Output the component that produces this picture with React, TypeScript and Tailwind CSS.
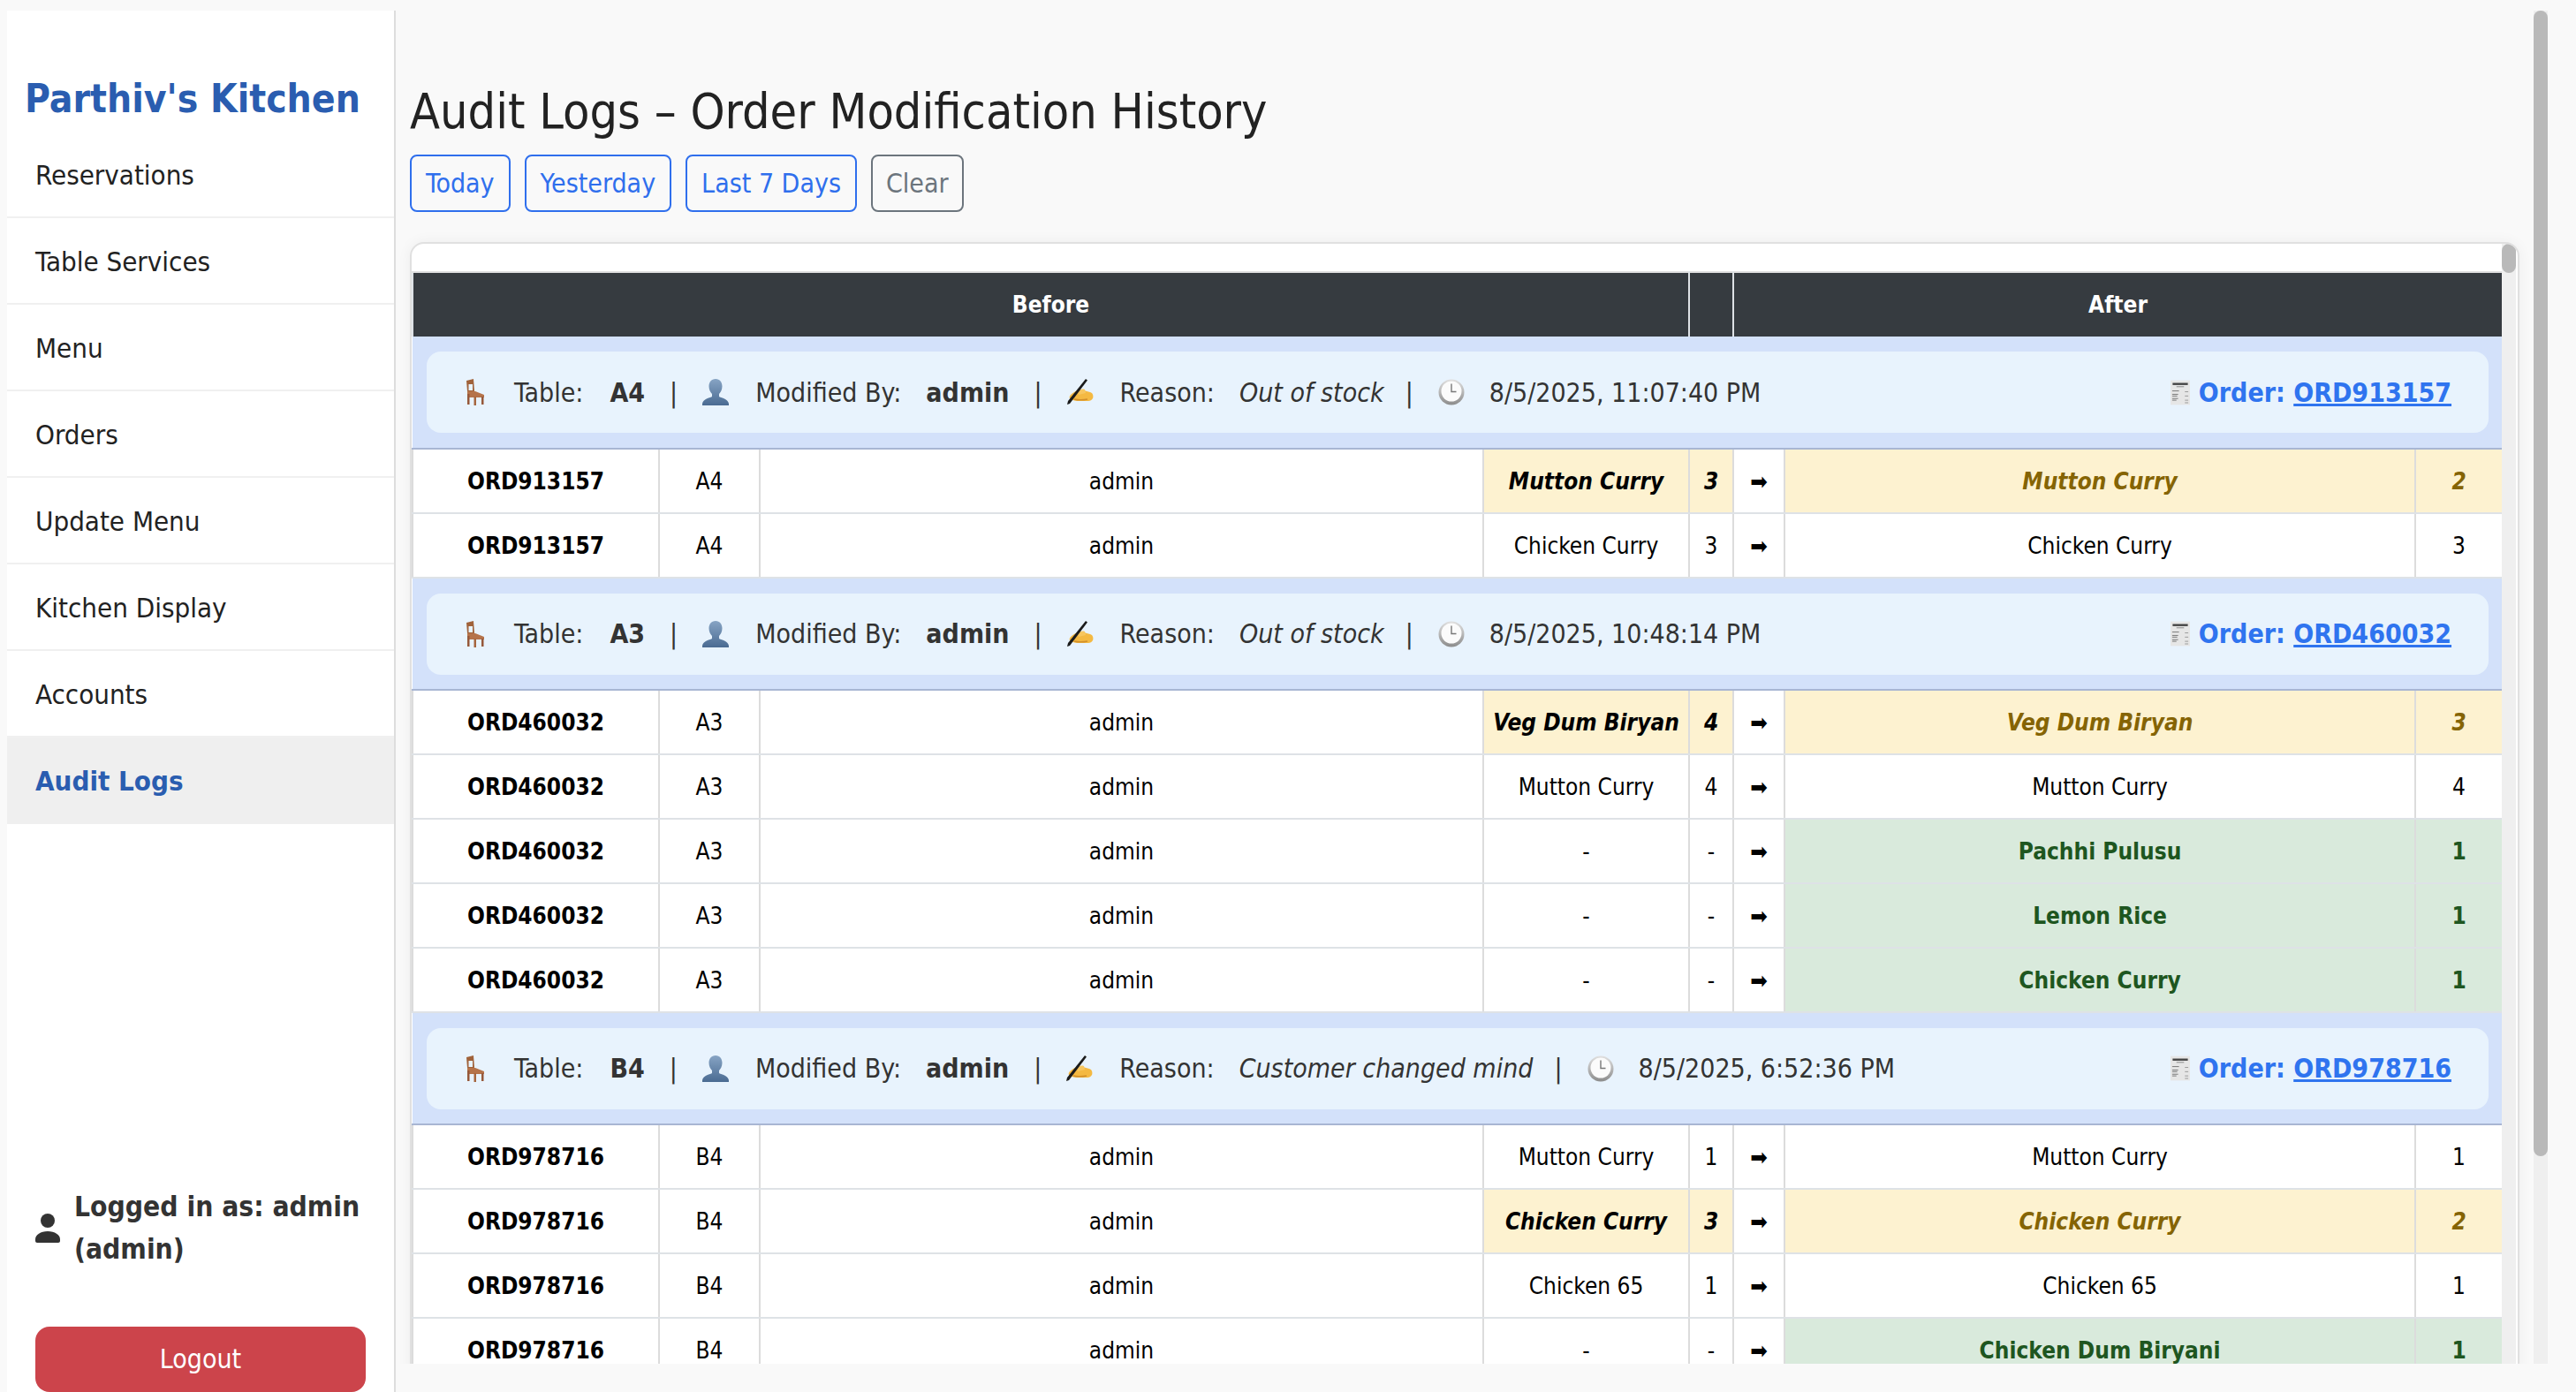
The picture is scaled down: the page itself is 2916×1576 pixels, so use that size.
import React from "react";

type RowKind = "plain" | "changed" | "added";

interface LogRow {
  item: string;
  qty: string;
  afterItem: string;
  afterQty: string;
  kind: RowKind;
}

interface LogGroup {
  table: string;
  reason: string;
  time: string;
  order: string;
  rows: LogRow[];
}

const navItems = ["Reservations", "Table Services", "Menu", "Orders", "Update Menu", "Kitchen Display", "Accounts"];

const groups: LogGroup[] = [
  {
    table: "A4",
    reason: "Out of stock",
    time: "8/5/2025, 11:07:40 PM",
    order: "ORD913157",
    rows: [
      { item: "Mutton Curry", qty: "3", afterItem: "Mutton Curry", afterQty: "2", kind: "changed" },
      { item: "Chicken Curry", qty: "3", afterItem: "Chicken Curry", afterQty: "3", kind: "plain" },
    ],
  },
  {
    table: "A3",
    reason: "Out of stock",
    time: "8/5/2025, 10:48:14 PM",
    order: "ORD460032",
    rows: [
      { item: "Veg Dum Biryan", qty: "4", afterItem: "Veg Dum Biryan", afterQty: "3", kind: "changed" },
      { item: "Mutton Curry", qty: "4", afterItem: "Mutton Curry", afterQty: "4", kind: "plain" },
      { item: "-", qty: "-", afterItem: "Pachhi Pulusu", afterQty: "1", kind: "added" },
      { item: "-", qty: "-", afterItem: "Lemon Rice", afterQty: "1", kind: "added" },
      { item: "-", qty: "-", afterItem: "Chicken Curry", afterQty: "1", kind: "added" },
    ],
  },
  {
    table: "B4",
    reason: "Customer changed mind",
    time: "8/5/2025, 6:52:36 PM",
    order: "ORD978716",
    rows: [
      { item: "Mutton Curry", qty: "1", afterItem: "Mutton Curry", afterQty: "1", kind: "plain" },
      { item: "Chicken Curry", qty: "3", afterItem: "Chicken Curry", afterQty: "2", kind: "changed" },
      { item: "Chicken 65", qty: "1", afterItem: "Chicken 65", afterQty: "1", kind: "plain" },
      { item: "-", qty: "-", afterItem: "Chicken Dum Biryani", afterQty: "1", kind: "added" },
    ],
  },
];

const ChairIcon = () => (
  <svg width="22" height="30" viewBox="0 0 22 30" className="mr-[5px] shrink-0">
    <path d="M1 2l8-2 1 14H2z" fill="#a0623a" />
    <rect x="3.500" y="6" width="4.500" height="7" fill="#e8f3fd" />
    <path d="M2 14h9l10 4v3H2z" fill="#b5734a" />
    <rect x="2" y="17" width="2.500" height="12" fill="#96583a" />
    <rect x="9.500" y="20" width="2.500" height="10" fill="#a5663f" />
    <rect x="18" y="20" width="2.500" height="9" fill="#96583a" />
  </svg>
);

const BustIcon = () => (
  <svg width="30" height="30" viewBox="0 0 30 30" className="mr-[2px] shrink-0">
    <defs>
      <linearGradient id="bust" x1="0" y1="0" x2="0" y2="1">
        <stop offset="0" stopColor="#87a4c4" />
        <stop offset="1" stopColor="#4a6b92" />
      </linearGradient>
    </defs>
    <path
      d="M15 0c5 0 7.500 4 7.500 8.500 0 4-2 7-3.500 8.500v3c1.500 1.500 10 2 11 8v2H0v-2c1-6 9.500-6.500 11-8v-3C9.500 15.500 7.500 12.500 7.500 8.500 7.500 4 10 0 15 0z"
      fill="url(#bust)"
    />
  </svg>
);

const HandIcon = () => (
  <svg width="30" height="30" viewBox="0 0 30 30" className="mr-[2px] shrink-0">
    <path d="M4 18c3-3 7-5 11-6l11 3c3 1 4 4 3 7-1 2-3 3-5 3H12c-3 0-7-1-9-3-1-1 0-3 1-4z" fill="#f4b942" />
    <path d="M8 23c4 1 10 1 15 0" stroke="#d18f2a" strokeWidth="1.500" fill="none" />
    <path d="M12 14c2-2 5-3 8-2l1 4-8 2z" fill="#f7c65f" />
    <path d="M21 0l2 1.500L3 28 0 29l1-4z" fill="#1b1b1b" />
  </svg>
);

const ClockIcon = () => (
  <svg width="30" height="30" viewBox="0 0 30 30" className="shrink-0">
    <defs>
      <linearGradient id="clockRim" x1="0" y1="0" x2="0" y2="1">
        <stop offset="0" stopColor="#e0e0e0" />
        <stop offset="1" stopColor="#8c8c8c" />
      </linearGradient>
    </defs>
    <circle cx="15" cy="15" r="14.500" fill="url(#clockRim)" />
    <circle cx="15" cy="14" r="11.500" fill="#fbfbfb" />
    <path d="M15 5.500V14.500h5.500" stroke="#777777" strokeWidth="1.400" fill="none" />
  </svg>
);

const ReceiptIcon = () => (
  <svg width="22" height="29" viewBox="0 0 23 29" className="shrink-0">
    <rect width="23" height="29" fill="#e6e6e6" />
    <rect x="2.500" y="3" width="18" height="2.500" fill="#444444" />
    <rect x="7" y="7" width="9" height="1" fill="#888888" />
    <rect x="2" y="12" width="8" height="1" fill="#777777" />
    <rect x="17" y="13" width="4" height="1" fill="#999999" />
    <rect x="2" y="16" width="7" height="1" fill="#777777" />
    <rect x="2" y="18" width="6" height="1" fill="#777777" />
    <rect x="17" y="18" width="4" height="1" fill="#999999" />
    <rect x="2" y="21" width="7" height="1" fill="#777777" />
    <rect x="2" y="23" width="5" height="1" fill="#777777" />
    <rect x="17" y="23" width="4" height="1" fill="#999999" />
    <rect x="17" y="26" width="4" height="1" fill="#999999" />
  </svg>
);

const UserIcon = () => (
  <svg width="28" height="33" viewBox="0 0 28 33" className="shrink-0">
    <circle cx="14" cy="8" r="8" fill="#333333" />
    <path d="M0 31v-2c0-5 6-9 14-9s14 4 14 9v2c0 1-1 2-2 2H2c-1 0-2-1-2-2z" fill="#333333" />
  </svg>
);

const cellBorder = "border-x-2 border-b-2 border-x-[#dcdcdc] border-b-[#dee2e6] pt-[2px]";

const Row: React.FC<{ row: LogRow; order: string; table: string }> = ({ row, order, table }) => {
  const changed = row.kind === "changed";
  const added = row.kind === "added";
  const afterClass = changed
    ? "bg-[#fdf2d0] text-[#856404] font-bold italic"
    : added
      ? "bg-[#d9eadc] text-[#1e5620] font-bold"
      : "bg-white text-black";
  const beforeClass = changed ? "bg-[#fdf2d0] font-bold italic" : "bg-white";

  return (
    <tr className="h-[73px] text-center text-[26px] text-black">
      <td className={`${cellBorder} bg-white font-bold`}>{order}</td>
      <td className={`${cellBorder} bg-white`}>{table}</td>
      <td className={`${cellBorder} bg-white`}>admin</td>
      <td className={`${cellBorder} ${beforeClass} whitespace-nowrap`}>{row.item}</td>
      <td className={`${cellBorder} ${beforeClass}`}>{row.qty}</td>
      <td className={`${cellBorder} bg-white`}>➡</td>
      <td className={`${cellBorder} ${afterClass}`}>{row.afterItem}</td>
      <td className={`${cellBorder} ${afterClass}`}>{row.afterQty}</td>
    </tr>
  );
};

const GroupHeader: React.FC<{ group: LogGroup }> = ({ group }) => (
  <tr>
    <td colSpan={8} className="h-[127px] border-b-2 border-b-[#a8b6d3] bg-[#d3e1fa] px-4">
      <div className="flex h-[92px] items-center justify-between rounded-2xl bg-[#e8f3fd] pl-[44px] pr-[42px] text-[30px] text-[#333333]">
        <div className="flex items-center gap-[28px] whitespace-nowrap">
          <ChairIcon />
          <span className="flex gap-[30px]">
            <span>Table:</span>
            <b>{group.table}</b>
          </span>
          <span>|</span>
          <BustIcon />
          <span className="flex gap-[28px]">
            <span>Modified By:</span>
            <b>admin</b>
          </span>
          <span>|</span>
          <HandIcon />
          <span className="flex gap-[28px]">
            <span>Reason:</span>
            <i>{group.reason}</i>
          </span>
          <span className="-ml-[4px]">|</span>
          <ClockIcon />
          <span>{group.time}</span>
        </div>
        <div className="flex items-center gap-[10px] whitespace-nowrap font-bold text-[#2f74ef]">
          <ReceiptIcon />
          <span>
            Order: <a className="underline">{group.order}</a>
          </span>
        </div>
      </div>
    </td>
  </tr>
);

export default function App() {
  return (
    <div className="flex h-[1576px] w-[2916px] overflow-hidden bg-[#f9f9f9] font-['DejaVu_Sans_Condensed','DejaVu_Sans',sans-serif] font-stretch-condensed">
      <aside className="ml-2 mt-3 flex h-[1564px] w-[440px] shrink-0 flex-col border-r-2 border-r-[#dddddd] bg-white">
        <h1 className="mt-[68px] pl-[20px] text-[44px] font-bold leading-[63px] text-[#2a5db0] whitespace-nowrap">Parthiv's Kitchen</h1>
        <nav className="mt-[6px] flex flex-col">
          {navItems.map((name) => (
            <a key={name} className="flex h-[98px] items-center border-b-2 border-b-[#f0f0f0] pl-8 pt-[2px] text-[31px] text-[#222222]">
              {name}
            </a>
          ))}
          <a className="flex h-[98px] items-center bg-[#efefef] pl-8 text-[31px] font-bold text-[#2a5db0]">Audit Logs</a>
        </nav>
        <div className="mt-auto flex items-center gap-4 pl-8 text-[31.500px] font-bold leading-[48px] text-[#333333]">
          <UserIcon />
          <div>
            Logged in as: admin
            <br />
            (admin)
          </div>
        </div>
        <button className="ml-8 mt-[64px] h-[74px] w-[374px] rounded-2xl bg-[#cc444b] pb-[2px] text-[30px] text-white">Logout</button>
      </aside>

      <main className="mt-3 flex h-[1532px] min-w-0 flex-1 overflow-hidden">
        <div className="w-[2420px] shrink-0 overflow-hidden pl-4 pt-[76px]">
          <h2 className="text-[55.300px] leading-[76px] text-[#222222] whitespace-nowrap">Audit Logs – Order Modification History</h2>
          <div className="mt-[11px] flex gap-4 text-[30px]">
            <button className="h-[65px] rounded-lg border-2 border-[#2f6fed] px-4 text-[#2f6fed]">Today</button>
            <button className="h-[65px] rounded-lg border-2 border-[#2f6fed] px-4 text-[#2f6fed]">Yesterday</button>
            <button className="h-[65px] rounded-lg border-2 border-[#2f6fed] px-4 text-[#2f6fed]">Last 7 Days</button>
            <button className="h-[65px] rounded-lg border-2 border-[#6c757d] px-[15px] text-[#6c757d]">Clear</button>
          </div>
          <div className="mt-[34px] flex h-[1400px] w-[2388px] overflow-hidden rounded-t-2xl border-2 border-[#e0e0e0] bg-white shadow-[0_0_16px_rgba(0,0,0,0.05)]">
            <div className="w-[2366px] shrink-0 pt-[31px]">
              <table className="w-[2366px] table-fixed border-collapse">
                <colgroup>
                  <col className="w-[279px]" />
                  <col className="w-[114px]" />
                  <col className="w-[819px]" />
                  <col className="w-[233px]" />
                  <col className="w-[50px]" />
                  <col className="w-[58px]" />
                  <col className="w-[714px]" />
                  <col className="w-[99px]" />
                </colgroup>
                <thead>
                  <tr className="h-[73px] bg-[#363b40] text-[26px] font-bold text-white">
                    <th colSpan={4} className="border-x-2 border-t-2 border-x-[#dee2e6] border-t-[#e0e0e0]">Before</th>
                    <th className="border-x-2 border-t-2 border-x-[#dee2e6] border-t-[#e0e0e0]" />
                    <th colSpan={3} className="border-x-2 border-t-2 border-x-[#dee2e6] border-t-[#e0e0e0]">After</th>
                  </tr>
                </thead>
                <tbody>
                  {groups.map((group) => (
                    <React.Fragment key={group.order}>
                      <GroupHeader group={group} />
                      {group.rows.map((row, i) => (
                        <Row key={i} row={row} order={group.order} table={group.table} />
                      ))}
                    </React.Fragment>
                  ))}
                </tbody>
              </table>
            </div>
            <div className="w-4 shrink-0 bg-[#efefef]">
              <div className="h-[33px] rounded-full bg-[#b9b9b9]" />
            </div>
          </div>
        </div>
        <div className="h-full w-4 shrink-0 bg-[#efefef]">
          <div className="h-[1297px] rounded-full bg-[#b9b9b9]" />
        </div>
      </main>
    </div>
  );
}
